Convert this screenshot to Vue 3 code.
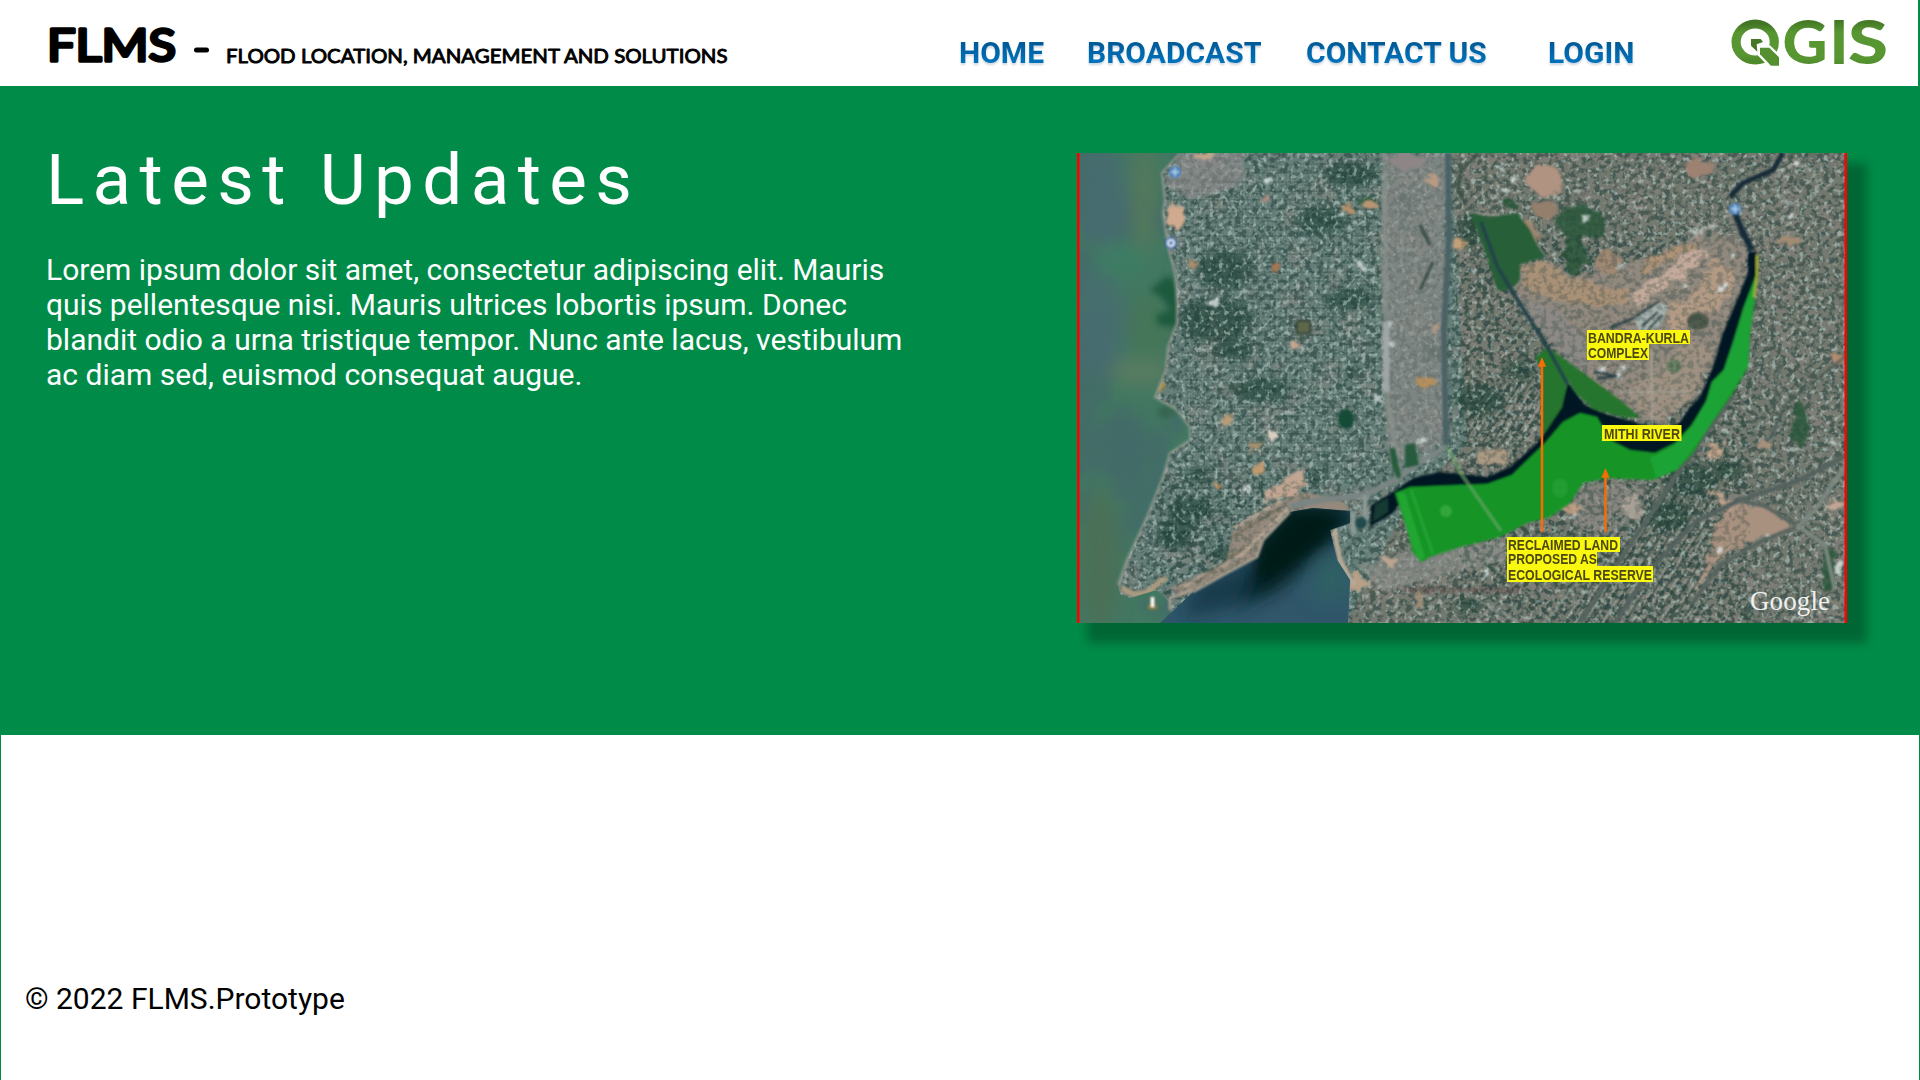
<script setup>
const links = [
  { label: 'HOME', width: 85, gap: 43 },
  { label: 'BROADCAST', width: 174, gap: 45 },
  { label: 'CONTACT US', width: 181, gap: 61 },
  { label: 'LOGIN', width: 86, gap: 0 },
]

// Bare-soil patches: centre x, centre y, radius x, radius y, colour
const patches = [
  [1205, 157, 9, 5, '#c0a58a'], [1175, 217, 9, 13, '#d0aa8e'], [1193, 263, 5, 5, '#a98d6b'],
  [1265, 199, 5, 5, '#a88d80'], [1275, 267, 4, 6, '#a8744e'], [1348, 209, 6, 4, '#b3906c'],
  [1371, 205, 7, 4, '#bb9472'], [1434, 181, 7, 5, '#b99a83'], [1461, 245, 8, 5, '#c4a078'],
  [1295, 346, 4, 4, '#c6a78f'], [1425, 382, 11, 5, '#b58e5c'], [1436, 330, 5, 5, '#b29780'],
  [1160, 387, 5, 9, '#a48b51'], [1226, 418, 7, 6, '#b69c78'], [1273, 437, 5, 4, '#ddd0c3'],
  [1255, 446, 10, 4, '#a68f6e'], [1258, 470, 6, 5, '#bf9a70'], [1217, 485, 5, 4, '#c69a68'],
  [1408, 161, 18, 8, '#8e8586'], [1545, 180, 17, 16, '#b09380'], [1700, 168, 14, 8, '#9d8271'],
  [1790, 240, 15, 5, '#a38b73'], [1838, 357, 7, 6, '#b48b72'], [1715, 450, 8, 9, '#c4a58b'],
  [1765, 445, 6, 5, '#a7917b'], [1573, 508, 11, 7, '#bb9c84'], [1633, 508, 9, 12, '#aaa095'],
  [1494, 456, 16, 9, '#ac9983'], [1836, 505, 9, 5, '#c4a695'], [1391, 562, 6, 4, '#bda68f'],
  [1357, 583, 8, 10, '#b7a088'], [1418, 600, 5, 7, '#9b8b75'], [1527, 232, 14, 10, '#9d8672'],
  [1545, 212, 12, 8, '#947f6c'], [1608, 262, 14, 12, '#a08872'],
]

// Tree cover
const woods = [
  [1350, 174, 28, 13], [1320, 220, 25, 14], [1225, 270, 28, 20],
  [1215, 320, 38, 22], [1235, 350, 22, 10], [1353, 372, 6, 8], [1303, 327, 8, 8],
  [1470, 230, 12, 18], [1436, 352, 14, 8], [1690, 480, 28, 18], [1668, 515, 22, 16],
  [1748, 614, 7, 6], [1725, 470, 20, 10], [1315, 478, 10, 6], [1200, 475, 12, 8],
  [1175, 535, 20, 14], [1222, 553, 12, 7], [1470, 605, 16, 8], [1800, 150, 14, 5],
  [1405, 200, 15, 4], [1405, 214, 8, 3], [1424, 233, 5, 8], [1350, 300, 24, 10],
  [1190, 510, 24, 12], [1260, 390, 30, 12], [1480, 400, 24, 16], [1520, 370, 16, 10],
]

const thickets = [
  [1580, 223, 25, 17], [1576, 255, 12, 20], [1800, 425, 8, 22], [1829, 570, 6, 24],
  [1509, 204, 7, 5], [1365, 200, 8, 4],
]

const glints = [
  [1268, 181], [1340, 216], [1361, 268], [1213, 302], [1390, 323], [1390, 343], [1378, 398],
  [1422, 441], [1426, 457], [1245, 488], [1619, 265], [1733, 255], [1701, 230], [1692, 234],
  [1725, 431], [1838, 568], [1767, 536], [1720, 548], [1572, 516], [1487, 574], [1505, 190],
  [1720, 287], [1683, 285], [1655, 320], [1648, 327], [1600, 370], [1617, 376], [1833, 442],
  [1512, 180], [1500, 170], [1585, 217], [1710, 226], [1605, 366], [1623, 368],
]
</script>

<template>
  <div class="page">
    <header class="bar">
      <svg class="brand" viewBox="0 0 720 60" role="img">
        <g class="brand-big">
          <text x="-1" y="48" textLength="129" lengthAdjust="spacingAndGlyphs">FLMS</text>
          <path d="M148.500 37h10" />
        </g>
        <text class="brand-small" x="178" y="49.500" textLength="501.500" lengthAdjust="spacingAndGlyphs">FLOOD LOCATION, MANAGEMENT AND SOLUTIONS</text>
      </svg>
      <nav class="nav">
        <a v-for="l in links" :key="l.label" :style="{ width: l.width + 'px', marginRight: l.gap + 'px' }">{{ l.label }}</a>
      </nav>
      <svg class="qgis" viewBox="0 0 160 68" role="img">
        <defs>
          <linearGradient id="leaf" x1="0" y1="0" x2="0" y2="1">
            <stop offset="0" stop-color="#427524" />
            <stop offset=".25" stop-color="#589632" />
            <stop offset=".85" stop-color="#589632" />
            <stop offset="1" stop-color="#4e8a2a" />
          </linearGradient>
          <linearGradient id="leafText" gradientUnits="userSpaceOnUse" x1="0" y1="11" x2="0" y2="56">
            <stop offset="0" stop-color="#427524" />
            <stop offset=".28" stop-color="#589632" />
            <stop offset=".85" stop-color="#589632" />
            <stop offset="1" stop-color="#4e8a2a" />
          </linearGradient>
        </defs>
        <g transform="translate(0 9)">
          <ellipse cx="24.200" cy="24" rx="19.100" ry="18" fill="none" stroke="url(#leaf)" stroke-width="9.200" />
          <path d="M29 29.700h9.300l9.700 9.600v8.400h-8L29 36.300z" fill="#fff" stroke="#fff" stroke-width="4.500" />
          <path d="M20 21h9.700l2.300 3-6.300 2.300.6 7.400-6.300-6z" fill="#447825" />
          <path d="M29 29.700h9.300l9.700 9.600v8.400h-8L29 36.300z" fill="#549030" />
        </g>
        <g class="qgis-text" fill="url(#leafText)">
          <text x="51.500" y="55" textLength="45" lengthAdjust="spacingAndGlyphs">G</text>
          <text x="98.500" y="55" textLength="19" lengthAdjust="spacingAndGlyphs">I</text>
          <text x="117" y="55" textLength="40" lengthAdjust="spacingAndGlyphs">S</text>
        </g>
      </svg>
    </header>

    <main class="hero">
      <section class="news">
        <h1>Latest Updates</h1>
        <p>
          Lorem ipsum dolor sit amet, consectetur adipiscing elit. Mauris<br />
          quis pellentesque nisi. Mauris ultrices lobortis ipsum. Donec<br />
          blandit odio a urna tristique tempor. Nunc ante lacus, vestibulum<br />
          ac diam sed, euismod consequat augue.
        </p>
      </section>

      <svg class="map" viewBox="1077 153 770 470" role="img">
        <defs>
          <filter id="dark" x="0" y="0" width="1" height="1" color-interpolation-filters="sRGB">
            <feTurbulence type="fractalNoise" baseFrequency=".17 .19" numOctaves="2" seed="4" />
            <feColorMatrix values="0 0 0 0 .12  0 0 0 0 .24  0 0 0 0 .22  5 0 0 0 -2.2" />
            <feGaussianBlur stdDeviation=".4" />
          </filter>
          <filter id="light" x="0" y="0" width="1" height="1" color-interpolation-filters="sRGB">
            <feTurbulence type="fractalNoise" baseFrequency=".21 .19" numOctaves="2" seed="11" />
            <feColorMatrix values="0 0 0 0 .7  0 0 0 0 .78  0 0 0 0 .76  0 5 0 0 -2.7" />
            <feGaussianBlur stdDeviation=".5" />
          </filter>
          <filter id="warm" x="0" y="0" width="1" height="1" color-interpolation-filters="sRGB">
            <feTurbulence type="fractalNoise" baseFrequency=".035" numOctaves="3" seed="7" />
            <feColorMatrix values="0 0 0 0 .58  0 0 0 0 .54  0 0 0 0 .52  0 0 5 0 -2.5" />
          </filter>
          <filter id="swell" x="0" y="0" width="1" height="1" color-interpolation-filters="sRGB">
            <feTurbulence type="fractalNoise" baseFrequency=".018 .012" numOctaves="3" seed="3" />
            <feColorMatrix values="0 0 0 0 .27  0 0 0 0 .4  0 0 0 0 .43  7 0 0 0 -3.3" />
          </filter>
          <filter id="rough">
            <feTurbulence type="fractalNoise" baseFrequency=".09" numOctaves="3" seed="9" result="n" />
            <feDisplacementMap in="SourceGraphic" in2="n" scale="14" xChannelSelector="R" yChannelSelector="G" />
            <feGaussianBlur stdDeviation=".8" />
          </filter>
          <filter id="soft1"><feGaussianBlur stdDeviation=".8" /></filter>
          <filter id="softText"><feGaussianBlur stdDeviation=".35" /></filter>
          <filter id="soft3"><feGaussianBlur stdDeviation="3" /></filter>
          <filter id="soft12" x="-.5" y="-.5" width="2" height="2"><feGaussianBlur stdDeviation="9" /></filter>
          <pattern id="streets" width="11" height="9" patternUnits="userSpaceOnUse">
            <path d="M1 0v9M6.500 0v5" stroke="#97a9a3" stroke-width="1.200" />
            <path d="M0 2h11" stroke="#34504b" stroke-width="1.200" />
          </pattern>
          <pattern id="rows" width="8" height="8" patternUnits="userSpaceOnUse" patternTransform="rotate(32)">
            <path d="M1 0v8" stroke="#aab0aa" stroke-width="1.500" />
            <path d="M4 0v8" stroke="#344a42" stroke-width="2" />
          </pattern>
          <clipPath id="seaClip">
            <path d="M1077 153H1180L1162 173 1165 200 1163 213 1168 247 1175 273 1177 303 1177 323 1168 347 1166 370 1155 397 1177 410 1190 427 1190 440 1170 453 1163 477 1147 517 1127 560 1118 585 1120 594 1130 598 1157 590 1170 603 1172 623H1077z" />
          </clipPath>
          <clipPath id="bayClip">
            <path d="M1160 623 1193 592 1227 573 1257 557 1263 540 1290 512 1313 508 1350 511 1350 523 1330 530 1337 560 1350 580 1348 623z" />
          </clipPath>
        </defs>

        <!-- City ground -->
        <rect x="1077" y="153" width="770" height="470" fill="#667e78" />
        <path d="M1452 153h395v470h-500l60-120 60-60z" fill="#74796f" />
        <rect x="1077" y="153" width="770" height="470" filter="url(#warm)" opacity=".35" />
        <path d="M1170 190 1240 175 1380 153V470L1290 505 1140 580 1190 440z" fill="url(#streets)" opacity=".4" />
        <path d="M1465 430 1480 390 1540 375V425L1510 460zM1560 623 1650 500 1720 480 1700 623z" fill="url(#rows)" opacity=".5" />
        <g fill="#1d4234" opacity=".6" filter="url(#soft3)">
          <ellipse v-for="(w, i) in woods" :key="'w' + i" :cx="w[0]" :cy="w[1]" :rx="w[2]" :ry="w[3]" />
        </g>
        <rect x="1077" y="153" width="770" height="470" filter="url(#dark)" opacity=".52" />
        <rect x="1077" y="153" width="770" height="470" filter="url(#light)" opacity=".6" />
        <g filter="url(#rough)" opacity=".6">
          <path d="M1384 153h62v285l-40 25-20-15z" fill="#8d8b89" />
          <path d="M1178 153h67l-4 32-55 14-22-22z" fill="#918c8d" />
          <path d="M1355 565l60-15 90-10 0 20-120 30z" fill="#8f918d" />
          <path d="M1575 485 1650 485 1600 530 1570 523z" fill="#8d8a84" />
        </g>
        <g fill="#2b563a" opacity=".85" filter="url(#rough)">
          <ellipse v-for="(w, i) in thickets" :key="'t' + i" :cx="w[0]" :cy="w[1]" :rx="w[2]" :ry="w[3]" />
        </g>

        <!-- Open ground around the complex -->
        <g filter="url(#rough)">
          <path d="M1520 265 1545 260 1580 277 1600 270 1640 262 1700 235 1735 233 1749 262 1737 300 1715 365 1690 403 1660 424 1625 410 1580 370 1552 342 1514 292z" fill="#958a7f" opacity=".85" />
          <path d="M1522 266 1545 262 1568 277 1598 285 1630 290 1625 305 1560 303 1524 287z" fill="#ad9478" opacity=".9" />
          <path d="M1627 300 1695 246 1712 250 1698 268 1637 306z" fill="#c4aa9b" />
          <path d="M1648 258 1700 240 1690 250 1640 275z" fill="#ac9276" />
          <path d="M1668 305 1690 300 1712 262 1735 268 1733 290 1710 318 1685 325 1670 338z" fill="#b29a85" />
          <path d="M1512 295 1560 312 1600 355 1580 370 1553 344z" fill="#8d8985" />
          <path d="M1625 395 1690 340 1715 350 1688 403 1660 423z" fill="#9f9182" />
          <path d="M1721 495 1740 504 1742 512 1730 512 1704 488z" fill="#b89e8b" />
          <path d="M1722 516 1740 505 1768 506 1794 526 1780 535 1740 545 1718 560 1696 590 1712 545z" fill="#a9917f" />
          <path d="M1262 497 1285 478 1306 468 1306 485 1290 495 1263 503z" fill="#c2a692" />
          <ellipse v-for="(p, i) in patches" :key="'p' + i" :cx="p[0]" :cy="p[1]" :rx="p[2]" :ry="p[3]" :fill="p[4]" />
          <rect v-for="(g, i) in glints" :key="'g' + i" :x="g[0] - 2.5" :y="g[1] - 2" width="6" height="5" fill="#dce5e4" opacity=".8" />
        </g>
        <g filter="url(#soft1)">
          <ellipse cx="1698" cy="321" rx="11" ry="9" fill="#4f5a4d" />
          <ellipse cx="1674" cy="366" rx="8" ry="7" fill="#6c8065" />
          <path d="M1634 318 1660 302 1668 306 1660 328 1640 332z" fill="#a9b3ae" />
          <path d="M1610 328 1634 318 1660 301M1642 326l16-14M1648 330l14-15M1594 372l22 4M1597 379l20-3" stroke="#2a4045" stroke-width="2.500" fill="none" />
          <path d="M1170 588 1227 562 1232 532 1290 497 1306 492 1345 502 1350 512 1290 511 1262 540 1257 557 1227 573 1180 597z" fill="#94897c" />
          <path d="M1234 528 1282 500M1184 586 1240 556 1290 507" stroke="#b5a594" stroke-width="3.500" fill="none" />
          <path d="M1230 538 1280 508M1196 582 1245 548" stroke="#6e6a5a" stroke-width="2" fill="none" />
          <path d="M1122 588q18 14 34-3l10-8" stroke="#a99a7f" stroke-width="6" fill="none" />
          <path d="M1334 530 1340 560 1354 585" stroke="#b6a997" stroke-width="5" fill="none" />
          <path d="M1297 321h13v12h-13z" fill="#5d674c" stroke="#34473a" stroke-width="2" />
        </g>
        <path d="M1500 260 1750 235V623H1460z" filter="url(#dark)" opacity=".25" />
        <path d="M1160 480h150v120h-150z" filter="url(#dark)" opacity=".25" />

        <!-- Roads and rail -->
        <g fill="none" filter="url(#soft1)">
          <path d="M1384 153 1385 300 1387 400 1400 470" stroke="#8a928c" stroke-width="5" opacity=".7" />
          <path d="M1386 322v70" stroke="#a8abad" stroke-width="7" opacity=".8" />
          <path d="M1448 153 1449 240 1444 330 1446 445" stroke="#4c6265" stroke-width="6" />
          <path d="M1446 447 1420 462 1395 480 1365 495 1320 500 1290 506" stroke="#7a8583" stroke-width="6" />
          <path d="M1847 455 1800 480 1740 500 1695 522 1650 570 1615 623" stroke="#55625f" stroke-width="5" />
          <path d="M1740 500 1765 506 1798 526 1760 542 1720 565 1690 605" stroke="#59655f" stroke-width="4" />
          <path d="M1847 463 1815 510 1798 526 1825 545 1835 590" stroke="#7b8780" stroke-width="4" />
          <path d="M1733 395 1690 455 1660 500 1620 560 1580 623" stroke="#56645f" stroke-width="5" />
          <path d="M1847 355 1785 405 1770 440M1780 360l-6 45" stroke="#4a5954" stroke-width="3.500" opacity=".7" />
          <path d="M1545 623 1640 500M1475 623 1500 600M1460 590 1520 623" stroke="#99a09a" stroke-width="2" opacity=".7" />
          <path d="M1478 153 1460 172 1458 190 1466 205M1420 225 1430 245M1420 290 1433 262" stroke="#3b4f46" stroke-width="3" />
          <path d="M1470 213 1515 217 1545 256M1690 240 1745 205M1652 350v70M1620 392h70" stroke="#aaa59b" stroke-width="2" opacity=".8" />
          <path d="M1353 512v22M1365 495v35" stroke="#8b9992" stroke-width="5" />
        </g>
        <g filter="url(#soft1)" fill="#285b3c">
          <path d="M1389 448 1393 470 1398 479 1401 476 1395 448zM1405 445l10-2 4 22-14 3z" />
          <ellipse cx="1346" cy="419" rx="8" ry="10" fill="#164c38" />
        </g>

        <!-- Sea and bay -->
        <g clip-path="url(#seaClip)">
          <rect x="1077" y="153" width="120" height="470" fill="#427761" />
          <rect x="1077" y="153" width="120" height="470" filter="url(#swell)" opacity=".55" />
          <g filter="url(#soft12)">
            <path d="M1085 153h38l5 70-22 30-25-20zM1080 275l25-10 25 50-15 60-38-5z" fill="#496a72" opacity=".8" />
            <ellipse cx="1125" cy="450" rx="28" ry="38" fill="#426b67" />
            <ellipse cx="1144" cy="200" rx="12" ry="60" fill="#54785b" />
            <ellipse cx="1122" cy="260" rx="26" ry="18" fill="#3e7d63" />
            <ellipse cx="1150" cy="325" rx="25" ry="30" fill="#457658" />
            <ellipse cx="1140" cy="372" rx="30" ry="15" fill="#587b60" />
            <ellipse cx="1100" cy="560" rx="20" ry="70" fill="#4b7057" />
          </g>
          <path d="M1150 290 1168 275 1180 285V328L1158 325 1156 315 1170 310 1162 298z" fill="#1f5a3c" filter="url(#soft3)" />
          <ellipse cx="1166" cy="412" rx="9" ry="6" fill="#356451" filter="url(#soft3)" />
        </g>
        <path d="M1180 153 1162 173 1165 200 1163 213 1168 247 1175 273 1177 303 1177 323 1168 347 1166 370 1155 397 1177 410 1190 427 1190 440 1170 453 1163 477 1147 517 1127 560 1118 585" fill="none" stroke="#adaaa0" stroke-width="2.500" filter="url(#soft1)" opacity=".6" />
        <g clip-path="url(#bayClip)">
          <rect x="1150" y="500" width="210" height="130" fill="#30566a" />
          <g filter="url(#soft12)">
            <path d="M1240 575 1265 535 1292 505H1352V528L1320 552 1280 588 1240 606 1205 596z" fill="#021c1c" />
            <path d="M1200 580 1260 560 1240 605 1180 618z" fill="#173b4b" />
            <path d="M1322 556 1348 560V600L1310 600z" fill="#2e6063" />
          </g>
          <path d="M1262 545 1290 512H1330L1322 540 1288 565 1255 580z" fill="#021d18" opacity=".7" filter="url(#soft3)" />
        </g>
        <path d="M1192 590l-22 8v12M1193 592 1227 573 1257 557 1263 540 1290 512" stroke="#b0a393" stroke-width="2.500" fill="none" filter="url(#soft1)" />

        <!-- River -->
        <g filter="url(#soft1)">
          <path d="M1783 153 1773 170 1743 183 1730 197" fill="none" stroke="#152b38" stroke-width="5" />
          <path d="M1735 213 1743 233 1752 250" fill="none" stroke="#152b38" stroke-width="6" />
          <path d="M1748 252 1748 273 1737 300 1723 333 1713 367 1700 397 1690 407 1680 422 1667 430 1640 424 1603 413 1585 405 1568 383 1560 407 1547 427 1537 443 1510 467 1487 477 1462 474 1440 472 1413 478 1393 492 1371 505 1370 527 1393 513 1410 489 1460 487 1487 485 1512 476 1545 446 1563 425 1580 416 1593 417 1607 440 1630 451 1655 454 1675 444 1692 426 1707 400 1712 383 1724 370 1734 340 1744 307 1756 280 1757 252z" fill="#061722" />
          <path d="M1375 505 1388 498 1388 512 1373 522z" fill="#193a32" />
          <ellipse cx="1361" cy="523" rx="6" ry="6" fill="#23484b" />
          <path d="M1470 213 1490 217 1517 213 1530 230 1536 243 1545 257 1520 264 1520 280 1510 290 1497 290 1487 257z" fill="#285f39" />
          <path d="M1535 357 1548 347 1583 373 1620 400 1640 417 1627 418 1593 409 1576 393 1568 380 1562 407 1542 437 1542 370z" fill="#25752f" />
          <path d="M1481 222 1498 268 1512 291 1545 343 1568 385" fill="none" stroke="#24424a" stroke-width="3.500" />
          <path d="M1395 493 1410 487 1460 485 1487 484 1512 475 1545 443 1563 422 1580 413 1597 417 1610 440 1630 450 1655 453 1675 443 1692 425 1707 400 1712 382 1724 370 1734 340 1744 307 1757 273 1755 300 1750 333 1748 367 1733 393 1707 430 1693 453 1677 470 1653 480 1607 478 1583 483 1570 503 1550 517 1527 523 1500 537 1460 547 1430 557 1422 562 1413 553 1407 530z" fill="#139426" />
          <path d="M1757 273 1744 307 1734 340 1724 370 1712 382 1706 402 1692 425 1675 445 1650 458 1656 478 1677 470 1707 430 1748 367 1750 333z" fill="#1ea334" />
          <path d="M1397 493h8l20 64-6 4-9-22z" fill="#22a630" />
          <path d="M1411 490l22 64" stroke="#24a532" stroke-width="3" fill="none" />
          <path d="M1447 447 1462 475 1501 531" fill="none" stroke="#6aa66a" stroke-width="3" opacity=".7" />
          <circle cx="1446" cy="511" r="6" fill="#31a63b" />
          <ellipse cx="1560" cy="488" rx="8" ry="10" fill="#2ca33a" opacity=".6" />
          <path d="M1757 255v20l-3 22" stroke="#a8b628" stroke-width="2" fill="none" />
        </g>

        <!-- Map markers -->
        <g filter="url(#soft1)">
          <g fill="#4d87bf"><circle cx="1175" cy="172" r="6" /><circle cx="1171" cy="243" r="6" fill="#315fa8" /><circle cx="1735" cy="209" r="6" /></g>
          <g fill="none" stroke="#bed8ee" stroke-width="1.500"><path d="M1171 172h8M1175 168v8M1731 209h8M1735 205v8" /><circle cx="1171" cy="243" r="3" stroke="#e7f2fa" stroke-width="2" /></g>
          <circle cx="1797" cy="185" r="20" fill="none" stroke="#c3c9c6" stroke-width="2.500" stroke-dasharray="4 3" opacity=".65" />
          <path d="M1789 219l4-6M1794 163h5" stroke="#e2e6e3" stroke-width="3" />
          <path d="M1148 607h9M1152.500 597v10" stroke="#8c7a3c" stroke-width="5" />
          <path d="M1152.500 597v10" stroke="#fff" stroke-width="3" />
          <path d="M1404 590h118" stroke="#5b3e41" stroke-width="6" stroke-dasharray="3 2 5 2 2 2" opacity=".55" />
        </g>
        <g stroke="#f96c04" stroke-width="2.500" fill="#f96c04">
          <path d="M1542 365V532M1605.500 475V532" />
          <path d="M1542 359l3 7h-6zM1605.500 470l3 7h-6z" stroke-width="1.500" />
        </g>

        <!-- Labels -->
        <g fill="#fbf810">
          <path d="M1587 330h103v14h-41v16h-62zM1602 425h79.500v16H1602zM1507 537h113v15h-23v14h56v16h-146z" />
        </g>
        <g class="labels" filter="url(#softText)">
          <text x="1588" y="342.500" textLength="101" lengthAdjust="spacingAndGlyphs">BANDRA-KURLA</text>
          <text x="1588" y="357.500" textLength="60" lengthAdjust="spacingAndGlyphs">COMPLEX</text>
          <text x="1604" y="438.500" textLength="76" lengthAdjust="spacingAndGlyphs">MITHI RIVER</text>
          <text x="1508" y="549.500" textLength="110" lengthAdjust="spacingAndGlyphs">RECLAIMED LAND</text>
          <text x="1508" y="563.500" textLength="89" lengthAdjust="spacingAndGlyphs">PROPOSED AS</text>
          <text x="1508" y="579.500" textLength="144" lengthAdjust="spacingAndGlyphs">ECOLOGICAL RESERVE</text>
        </g>
        <text class="google" x="1750" y="610" textLength="80">Google</text>

        <path d="M1078.250 153V623M1845.750 153V623" stroke="#f00" stroke-width="2.500" />
      </svg>
    </main>

    <footer class="foot">© 2022 FLMS.Prototype</footer>
  </div>
</template>

<style>
body {
  margin: 0;
  background: #008c48;
}
</style>

<style scoped>
.page {
  width: 1920px;
  height: 1080px;
  display: flex;
  flex-direction: column;
  overflow: hidden;
  background: #008c48;
  font-family: Roboto, "Liberation Sans", sans-serif;
}
.bar {
  width: 1918px;
  height: 86px;
  flex: none;
  display: flex;
  align-items: flex-start;
  background: #fff;
}
.brand {
  width: 720px;
  height: 60px;
  margin: 13px 0 0 48px;
  flex: none;
  overflow: visible;
}
.brand-big {
  font: 400 45px Lato, sans-serif;
  stroke: #000;
  stroke-width: 3.4;
  stroke-linejoin: round;
}
.brand-big path {
  stroke-width: 5;
  stroke-linecap: round;
}
.brand-small {
  font: 400 19px Lato, sans-serif;
  stroke: #000;
  stroke-width: 0.9;
  stroke-linejoin: round;
}
.nav {
  display: flex;
  margin: 35px 0 0 191px;
  flex: none;
  width: 675px;
}
.nav a {
  flex: none;
  white-space: nowrap;
  font-size: 30px;
  font-weight: 700;
  line-height: 36px;
  color: transparent;
  background: linear-gradient(#005a96 22%, #0065a8 45%, #0072bb 75%);
  -webkit-background-clip: text;
  background-clip: text;
  filter: drop-shadow(0 2px 1px rgba(0, 40, 90, 0.2));
}
.qgis {
  width: 160px;
  height: 68px;
  margin: 9px 0 0 97px;
  flex: none;
  overflow: visible;
}
.qgis-text {
  font: 900 60px Lato, sans-serif;
}
.hero {
  height: 649px;
  flex: none;
  display: flex;
  align-items: flex-start;
}
.news {
  width: 1077px;
  padding: 51px 0 0 46px;
  flex: none;
  box-sizing: border-box;
  color: #fff;
}
.news h1 {
  margin: 0;
  font-size: 71px;
  font-weight: 400;
  line-height: 86px;
  letter-spacing: 8.35px;
  white-space: nowrap;
}
.news p {
  margin: 28.500px 0 0;
  font-size: 30px;
  line-height: 35.160px;
  white-space: nowrap;
}
.map {
  width: 770px;
  height: 470px;
  margin-top: 67px;
  flex: none;
  box-shadow: 15px 15px 10px 5px rgba(0, 0, 0, 0.27);
}
.labels {
  font: 700 14px "Liberation Sans", sans-serif;
  fill: #4b470c;
}
.google {
  font: 27px "Liberation Serif", serif;
  fill: #eef1ef;
}
.foot {
  width: 1918px;
  height: 345px;
  margin-left: 1px;
  box-sizing: border-box;
  padding: 246px 0 0 24px;
  background: #fff;
  color: #000;
  font-size: 30px;
  line-height: 36px;
}
</style>
